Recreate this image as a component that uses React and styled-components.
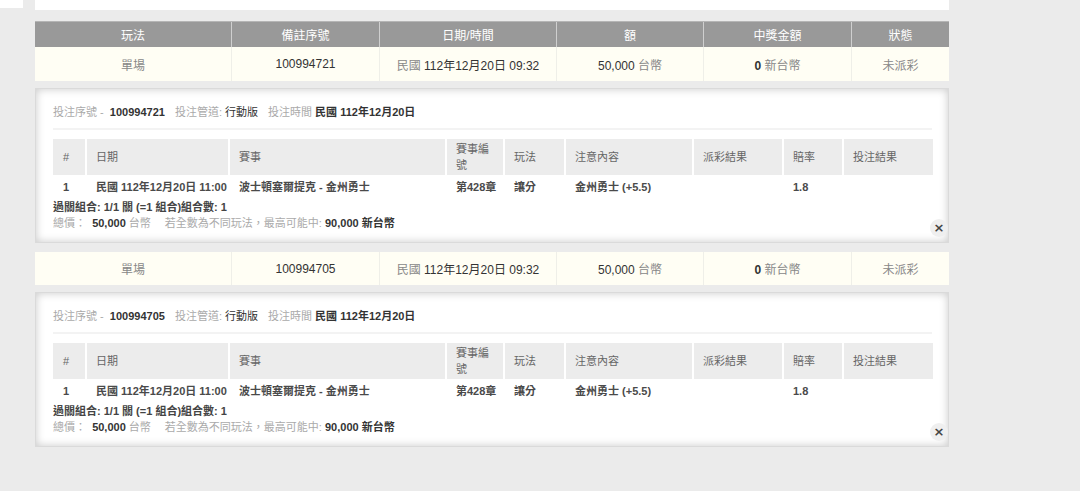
import React from "react";
import styled, { createGlobalStyle } from "styled-components";

const GlobalStyle = createGlobalStyle`
  body {
    margin: 0;
    background: #ebebeb;
    font-family: "Liberation Sans", "Noto Sans CJK TC", sans-serif;
    color: #333;
  }
`;

const Page = styled.div`
  display: flex;
  align-items: flex-start;
  min-height: 491px;
`;

const SideStub = styled.div`
  width: 23px;
  height: 8px;
  background: #fff;
  flex: none;
`;

const Main = styled.div`
  width: 914px;
  margin-left: 12px;
`;

const TopCard = styled.div`
  height: 10px;
  background: #fff;
`;

const summaryCols = "196px 148px 177px 147px 148px 98px";
const detailCols = "32px 143px 217px 58px 61px 128px 90px 60px 91px";

const HeadRow = styled.div`
  display: grid;
  grid-template-columns: ${summaryCols};
  margin-top: 11px;
  height: 26px;
  background: #999;
  border-top: 1px solid #b5b5b5;
  box-sizing: border-box;
`;

const HeadCell = styled.div`
  display: flex;
  align-items: center;
  justify-content: center;
  color: #fff;
  font-size: 12px;
  border-left: ${(p) => (p.$first ? "none" : "1px solid #cfcfcf")};
`;

const DataRow = styled.div`
  display: grid;
  grid-template-columns: ${summaryCols};
  height: ${(p) => p.$h}px;
  margin-top: ${(p) => p.$mt}px;
  background: #fffef4;
`;

const DataCell = styled.div`
  display: flex;
  align-items: center;
  justify-content: center;
  font-size: 12px;
  color: #333;
  border-left: ${(p) => (p.$first ? "none" : "1px solid #efefe8")};
`;

const Value = styled.span`
  white-space: pre;
`;

const Dim = styled.span`
  color: #888;
`;

const Panel = styled.div`
  position: relative;
  margin-top: 7px;
  height: 155px;
  box-sizing: border-box;
  padding: 15px 16px 0 17px;
  background: #fff;
  border: 1px solid #dadada;
  box-shadow: inset 0 0 8px rgba(0, 0, 0, 0.22);
`;

const InfoLine = styled.div`
  display: flex;
  gap: 10px;
  font-size: 11px;
  line-height: 16px;
  color: #aaa;
  white-space: pre;
`;

const Strong = styled.span`
  color: #333;
  font-weight: ${(p) => (p.$bold ? "bold" : "normal")};
`;

const Divider = styled.div`
  height: 2px;
  background: #f3f3f3;
  margin: 8px 0 9px;
`;

const InnerHead = styled.div`
  display: grid;
  grid-template-columns: ${detailCols};
  height: 36px;
`;

const InnerHeadCell = styled.div`
  display: flex;
  align-items: center;
  background: #ececec;
  padding-left: ${(p) => (p.$first ? 10 : 9)}px;
  padding-right: 4px;
  border-left: ${(p) => (p.$first ? "none" : "2px solid #fff")};
  font-size: 11px;
  line-height: 16px;
  color: #666;
  box-sizing: border-box;
  word-break: break-all;
`;

const InnerRow = styled.div`
  display: grid;
  grid-template-columns: ${detailCols};
  padding: 4px 0;
`;

const InnerCell = styled.div`
  padding-left: ${(p) => (p.$first ? 10 : 11)}px;
  font-size: 11px;
  line-height: 16px;
  font-weight: bold;
  color: #4a4a4a;
  white-space: nowrap;
`;

const ComboLine = styled.div`
  font-size: 11px;
  line-height: 16px;
  font-weight: bold;
  color: #444;
`;

const TotalLine = styled.div`
  display: flex;
  font-size: 11px;
  line-height: 16px;
  color: #aaa;
  white-space: pre;
`;

const MaxWin = styled.span`
  margin-left: 14px;
`;

const CloseButton = styled.button`
  position: absolute;
  right: 0;
  bottom: 5px;
  width: 18px;
  height: 18px;
  border-radius: 50%;
  border: none;
  padding: 0;
  background: #efefef;
  color: #444;
  font-size: 13px;
  line-height: 18px;
  font-family: "DejaVu Sans", sans-serif;
  font-weight: bold;
  cursor: pointer;
`;

const bets = [
  { id: "100994721", rowTop: 0, rowH: 34 },
  { id: "100994705", rowTop: 9, rowH: 33 },
];

const summaryHeaders = ["玩法", "備註序號", "日期/時間", "額", "中獎金額", "狀態"];
const detailHeaders = [
  "#",
  "日期",
  "賽事",
  "賽事編號",
  "玩法",
  "注意內容",
  "派彩結果",
  "賠率",
  "投注結果",
];

const BetBlock = ({ bet }) => (
  <>
    <DataRow $h={bet.rowH} $mt={bet.rowTop}>
      <DataCell $first>
        <Dim>單場</Dim>
      </DataCell>
      <DataCell>
        <Value>{bet.id}</Value>
      </DataCell>
      <DataCell>
        <Value>
          <Dim>民國 </Dim>112年12月20日 09:32
        </Value>
      </DataCell>
      <DataCell>
        <Value>
          50,000 <Dim>台幣</Dim>
        </Value>
      </DataCell>
      <DataCell>
        <Value>
          <b>0</b>
          {" "}
          <Dim>新台幣</Dim>
        </Value>
      </DataCell>
      <DataCell>
        <Dim>未派彩</Dim>
      </DataCell>
    </DataRow>
    <Panel>
      <InfoLine>
        <span>
          投注序號 -  <Strong $bold>{bet.id}</Strong>
        </span>
        <span>
          投注管道: <Strong>行動版</Strong>
        </span>
        <span>
          投注時間 <Strong $bold>民國 112年12月20日</Strong>
        </span>
      </InfoLine>
      <Divider />
      <InnerHead>
        {detailHeaders.map((h, i) => (
          <InnerHeadCell key={h} $first={i === 0}>
            {h}
          </InnerHeadCell>
        ))}
      </InnerHead>
      <InnerRow>
        <InnerCell $first>1</InnerCell>
        <InnerCell>民國 112年12月20日 11:00</InnerCell>
        <InnerCell>波士頓塞爾提克 - 金州勇士</InnerCell>
        <InnerCell>第428章</InnerCell>
        <InnerCell>讓分</InnerCell>
        <InnerCell>金州勇士 (+5.5)</InnerCell>
        <InnerCell />
        <InnerCell>1.8</InnerCell>
        <InnerCell />
      </InnerRow>
      <ComboLine>過關組合: 1/1 關 (=1 組合)組合數: 1</ComboLine>
      <TotalLine>
        <span>
          總價：  <Strong $bold>50,000</Strong> 台幣
        </span>
        <MaxWin>
          若全數為不同玩法，最高可能中: <Strong $bold>90,000 新台幣</Strong>
        </MaxWin>
      </TotalLine>
      <CloseButton aria-label="close">×</CloseButton>
    </Panel>
  </>
);

export default function App() {
  return (
    <>
      <GlobalStyle />
      <Page>
        <SideStub />
        <Main>
          <TopCard />
          <HeadRow>
            {summaryHeaders.map((h, i) => (
              <HeadCell key={h} $first={i === 0}>
                {h}
              </HeadCell>
            ))}
          </HeadRow>
          {bets.map((bet) => (
            <BetBlock key={bet.id} bet={bet} />
          ))}
        </Main>
      </Page>
    </>
  );
}
